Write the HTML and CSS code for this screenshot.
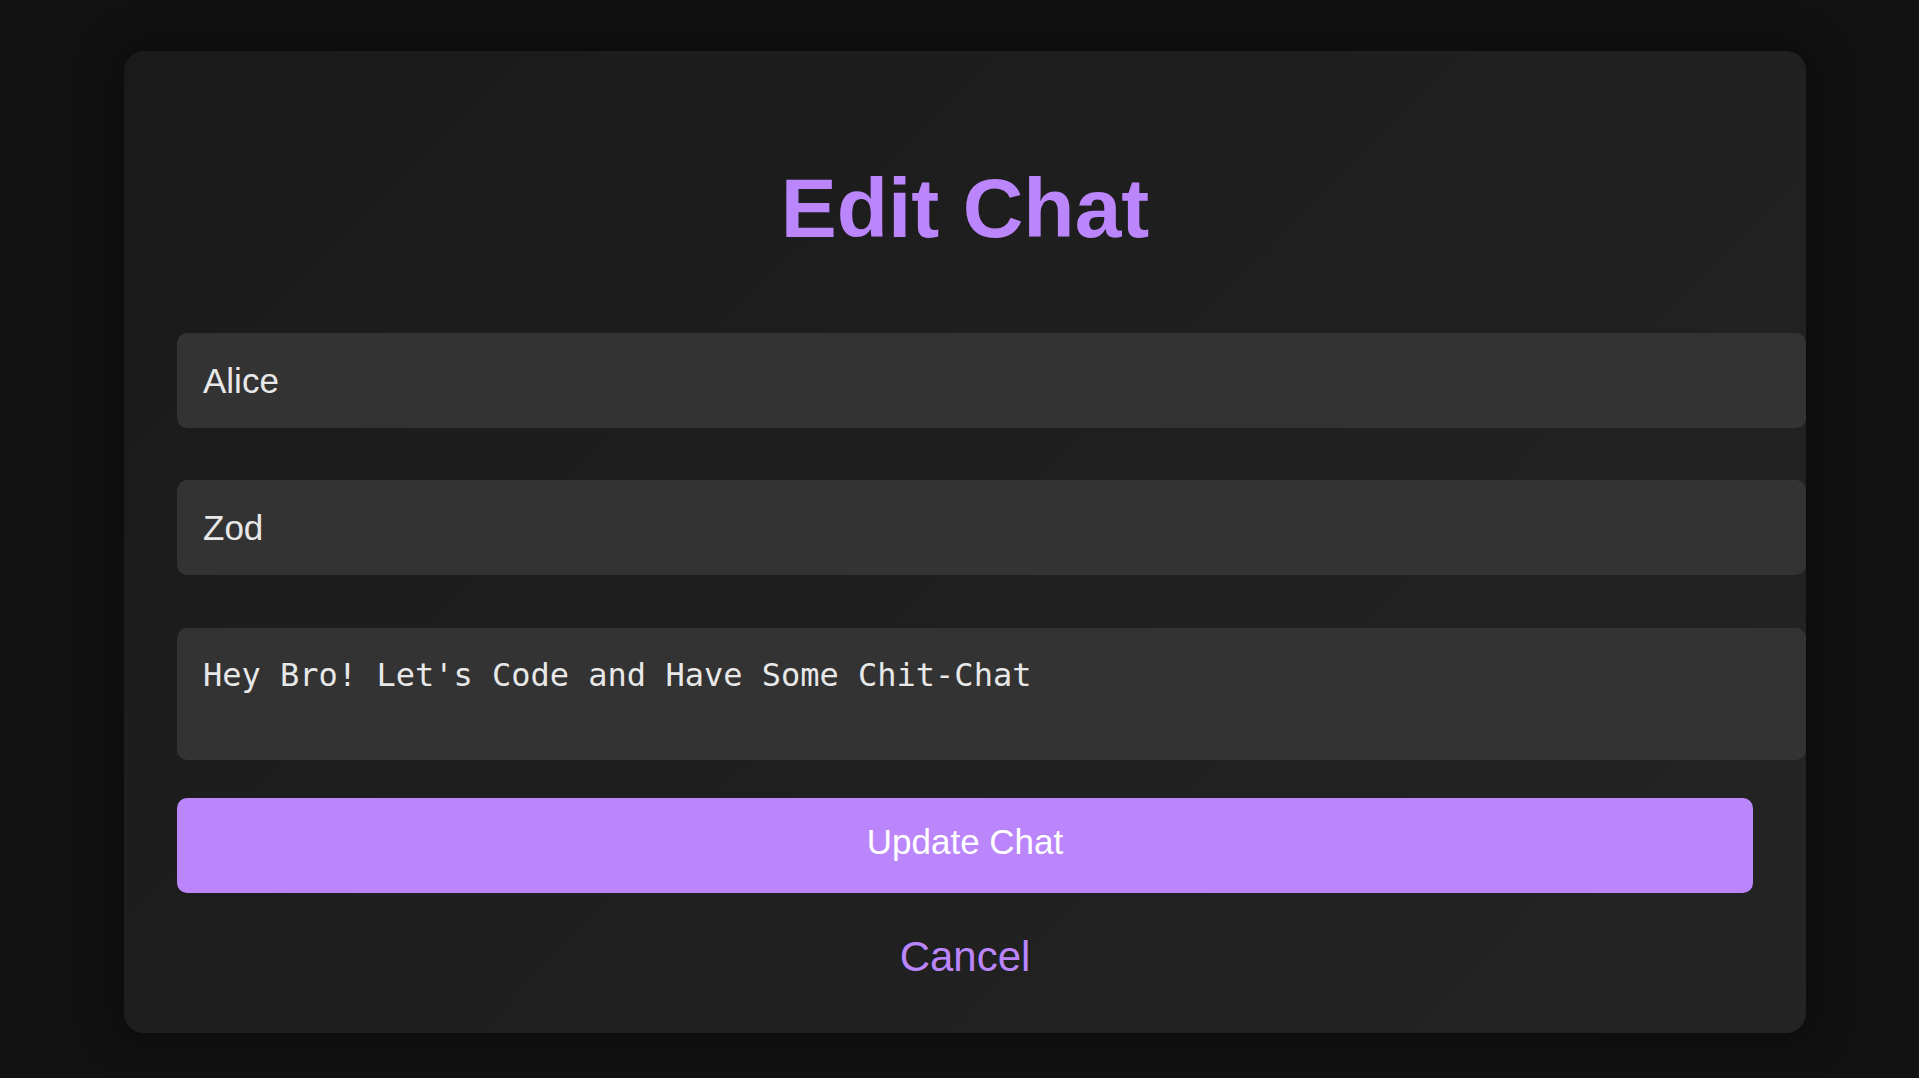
FILE: index.html
```html
<!DOCTYPE html>
<html lang="en">
<head>
<meta charset="utf-8">
<title>Edit Chat</title>
<link rel="stylesheet" href="styles.css">
</head>
<body>
<div class="page">
  <form class="card">
    <h1 class="title">Edit Chat</h1>
    <input class="field field-first" type="text" value="Alice">
    <input class="field field-second" type="text" value="Zod">
    <textarea class="field message">Hey Bro! Let's Code and Have Some Chit-Chat</textarea>
    <button class="submit" type="button">Update Chat</button>
    <a class="cancel" href="#">Cancel</a>
  </form>
</div>
</body>
</html>
```
FILE: styles.css
```css
html, body {
  margin: 0;
  padding: 0;
  background: #121212;
  height: 100%;
  overflow: hidden;
}
.page {
  box-sizing: border-box;
  height: 1078px;
  padding: 51px 113px 45px 124px;
  font-family: "Liberation Sans", Arial, sans-serif;
}
.card {
  box-sizing: border-box;
  width: 1682px;
  height: 982px;
  padding: 116px 53px 0 53px;
  border-radius: 20px;
  background: linear-gradient(135deg, #1a1a1a 0%, #1f1f1f 50%, #242424 100%);
  box-shadow: 0 0 40px 10px rgba(0, 0, 0, 0.35);
  display: flex;
  flex-direction: column;
  align-items: flex-start;
}
.title {
  margin: 0 0 83px 0;
  align-self: stretch;
  text-align: center;
  font-size: 84px;
  line-height: 83px;
  font-weight: 700;
  color: #bb86fc;
}
.field {
  box-sizing: border-box;
  width: calc(100% + 53px);
  height: 95px;
  margin: 0;
  padding: 0 26px;
  border: none;
  outline: none;
  border-radius: 10px;
  background: #333333;
  color: #e8e8e8;
  font-family: "Liberation Sans", Arial, sans-serif;
  font-size: 35px;
}
.field-first {
  margin-bottom: 52px;
}
.field-second {
  margin-bottom: 53px;
}
.message {
  height: 132px;
  margin-bottom: 38px;
  padding: 28px 26px;
  resize: none;
  font-family: "DejaVu Sans Mono", monospace;
  font-size: 32px;
  line-height: normal;
}
.submit {
  box-sizing: border-box;
  width: 100%;
  height: 95px;
  padding: 0 0 8px 0;
  border: none;
  border-radius: 10px;
  background: #bb86fc;
  color: #ffffff;
  font-family: "Liberation Sans", Arial, sans-serif;
  font-size: 35px;
  line-height: 87px;
  cursor: pointer;
}
.cancel {
  align-self: center;
  margin-top: 43px;
  font-size: 42px;
  line-height: 42px;
  color: #bb86fc;
  text-decoration: none;
}
```
